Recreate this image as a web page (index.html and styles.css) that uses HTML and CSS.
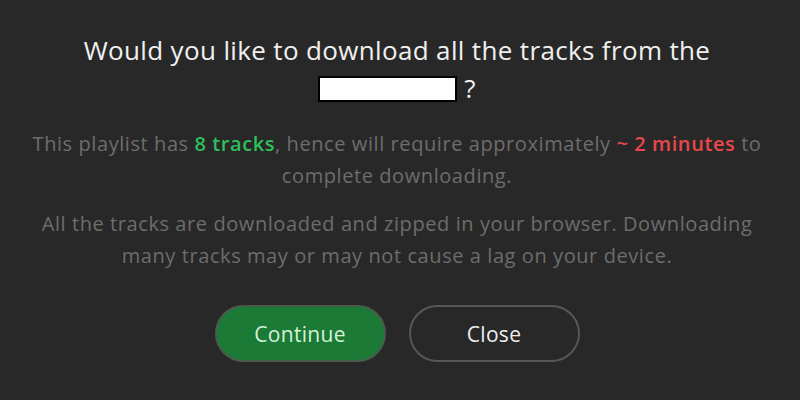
FILE: index.html
```html
<!DOCTYPE html>
<html lang="en">
<head>
<meta charset="utf-8">
<title>Download playlist</title>
<link rel="stylesheet" href="styles.css">
</head>
<body>
<main class="dialog">
  <h1 class="title">Would you like to download all the tracks from the <span class="name-box"></span> ?</h1>
  <p class="info">This playlist has <strong class="ok">8 tracks</strong>, hence will require approximately <strong class="warn">~ 2 minutes</strong> to complete downloading.</p>
  <p class="info">All the tracks are downloaded and zipped in your browser. Downloading many tracks may or may not cause a lag on your device.</p>
  <div class="actions">
    <button class="btn btn-primary" type="button">Continue</button>
    <button class="btn btn-secondary" type="button">Close</button>
  </div>
</main>
</body>
</html>
```
FILE: styles.css
```css
html, body {
  margin: 0;
  padding: 0;
  background: #282828;
  height: 100%;
}
body {
  font-family: "Open Sans", "Noto Sans", sans-serif;
  color: #6d6d6d;
}
.dialog {
  display: flex;
  flex-direction: column;
  align-items: center;
  padding: 31px 33px 0 27px;
  text-align: center;
}
.title {
  margin: 0 0 21px;
  max-width: 680px;
  font-size: 26px;
  font-weight: 400;
  letter-spacing: 0.35px;
  line-height: 38px;
  color: #f0f0f0;
}
.name-box {
  display: inline-block;
  width: 135px;
  height: 22px;
  background: #ffffff;
  border: 2px solid #000000;
  vertical-align: -4px;
}
.info {
  margin: 0 0 16px;
  font-size: 20px;
  letter-spacing: 0.58px;
  line-height: 32px;
  max-width: 740px;
}
.ok {
  color: #2fbf5b;
  font-weight: 600;
}
.warn {
  color: #e8474c;
  font-weight: 600;
}
.actions {
  display: flex;
  gap: 23px;
  margin-top: 17px;
}
.btn {
  width: 171px;
  height: 57px;
  border-radius: 29px;
  font-family: "Open Sans", "Noto Sans", sans-serif;
  font-size: 21px;
  letter-spacing: 0.3px;
  cursor: pointer;
}
.btn-primary {
  background: #1b7a36;
  border: 2px solid #4a5a4c;
  color: #d4f2d6;
}
.btn-secondary {
  background: #282828;
  border: 2px solid #575757;
  color: #eeeeee;
}
```
